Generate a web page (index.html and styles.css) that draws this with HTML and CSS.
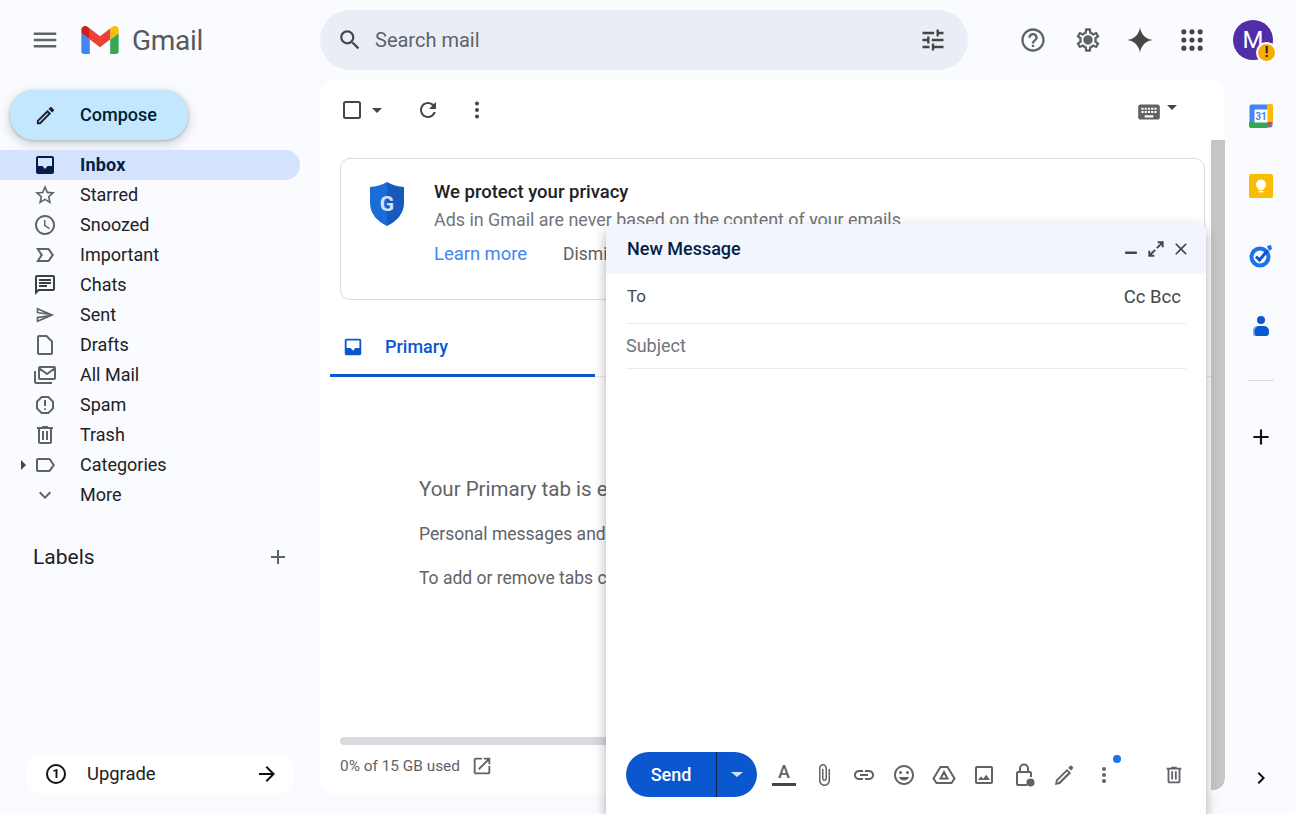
FILE: index.html
```html
<!DOCTYPE html>
<html lang="en">
<head>
  <meta charset="UTF-8">
  <title>Inbox - Gmail</title>
  <link rel="stylesheet" href="styles.css">
</head>
<body>
<div class="app">

  <header class="topbar">
    <div class="brand">
      <svg class="menu-icon" viewBox="0 0 24 24"><path d="M3 18h18v-2H3v2zm0-5h18v-2H3v2zm0-7v2h18V6H3z"/></svg>
      <svg class="logo" viewBox="52 42 88 66">
        <path fill="#4285f4" d="M58 108h14V74L52 59v43c0 3.32 2.69 6 6 6"/>
        <path fill="#34a853" d="M120 108h14c3.32 0 6-2.69 6-6V59l-20 15"/>
        <path fill="#fbbc04" d="M120 48v26l20-15v-8c0-7.42-8.47-11.65-14.4-7.2"/>
        <path fill="#ea4335" d="M72 74V48l24 18 24-18v26L96 92"/>
        <path fill="#c5221f" d="M52 51v8l20 15V48l-5.6-4.2c-5.94-4.45-14.4-.22-14.4 7.2"/>
      </svg>
      <span class="logo-text">Gmail</span>
    </div>
    <div class="search">
      <svg class="search-icon" viewBox="0 0 24 24"><path d="M15.5 14h-.79l-.28-.27C15.41 12.59 16 11.11 16 9.5 16 5.91 13.09 3 9.5 3S3 5.91 3 9.5 5.91 16 9.5 16c1.61 0 3.09-.59 4.23-1.57l.27.28v.79l5 4.99L20.49 19l-4.99-5zm-6 0C7.01 14 5 11.99 5 9.5S7.01 5 9.5 5 14 7.01 14 9.5 11.99 14 9.5 14z"/></svg>
      <span class="search-text">Search mail</span>
      <svg class="tune-icon" viewBox="0 0 24 24"><path d="M3 17v2h6v-2H3zM3 5v2h10V5H3zm10 16v-2h8v-2h-8v-2h-2v6h2zM7 9v2H3v2h4v2h2V9H7zm14 4v-2H11v2h10zm-6-4h2V7h4V5h-4V3h-2v6z"/></svg>
    </div>
    <div class="top-actions">
      <svg class="top-icon" viewBox="0 0 24 24"><path d="M11 18h2v-2h-2v2zm1-16C6.48 2 2 6.48 2 12s4.48 10 10 10 10-4.48 10-10S17.52 2 12 2zm0 18c-4.41 0-8-3.59-8-8s3.59-8 8-8 8 3.59 8 8-3.59 8-8 8zm0-14c-2.21 0-4 1.79-4 4h2c0-1.1.9-2 2-2s2 .9 2 2c0 2-3 1.75-3 5h2c0-2.25 3-2.5 3-5 0-2.21-1.79-4-4-4z"/></svg>
      <svg class="top-icon gear" viewBox="0 0 24 24"><path d="M19.43 12.98c.04-.32.07-.64.07-.98 0-.34-.03-.66-.07-.98l2.11-1.65c.19-.15.24-.42.12-.64l-2-3.46c-.09-.16-.26-.25-.44-.25-.06 0-.12.01-.17.03l-2.49 1c-.52-.4-1.08-.73-1.69-.98l-.38-2.65C14.46 2.18 14.25 2 14 2h-4c-.25 0-.46.18-.49.42l-.38 2.65c-.61.25-1.17.59-1.69.98l-2.49-1c-.06-.02-.12-.03-.18-.03-.17 0-.34.09-.43.25l-2 3.46c-.13.22-.07.49.12.64l2.11 1.65c-.04.32-.07.65-.07.98 0 .33.03.66.07.98l-2.11 1.65c-.19.15-.24.42-.12.64l2 3.46c.09.16.26.25.44.25.06 0 .12-.01.17-.03l2.49-1c.52.4 1.08.73 1.69.98l.38 2.65c.03.24.24.42.49.42h4c.25 0 .46-.18.49-.42l.38-2.65c.61-.25 1.17-.59 1.69-.98l2.49 1c.06.02.12.03.18.03.17 0 .34-.09.43-.25l2-3.46c.12-.22.07-.49-.12-.64l-2.11-1.65zm-1.98-1.71c.04.31.05.52.05.73 0 .21-.02.43-.05.73l-.14 1.13.89.7 1.08.84-.7 1.21-1.27-.51-1.04-.42-.9.68c-.43.32-.84.56-1.25.73l-1.06.43-.16 1.13-.2 1.35h-1.4l-.19-1.35-.16-1.13-1.06-.43c-.43-.18-.83-.41-1.23-.71l-.91-.7-1.06.43-1.27.51-.7-1.21 1.08-.84.89-.7-.14-1.13c-.03-.31-.05-.54-.05-.74s.02-.43.05-.73l.14-1.13-.89-.7-1.08-.84.7-1.21 1.27.51 1.04.42.9-.68c.43-.32.84-.56 1.25-.73l1.06-.43.16-1.13.2-1.35h1.39l.19 1.35.16 1.13 1.06.43c.43.18.83.41 1.23.71l.91.7 1.06-.43 1.27-.51.7 1.21-1.07.85-.89.7.14 1.13zM12 8c-2.21 0-4 1.79-4 4s1.79 4 4 4 4-1.79 4-4-1.79-4-4-4z"/></svg>
      <svg class="top-icon spark" viewBox="0 0 24 24"><path d="M12 1C12.7 7 17 11.3 23 12 17 12.7 12.7 17 12 23 11.3 17 7 12.7 1 12 7 11.3 11.3 7 12 1z"/></svg>
      <svg class="top-icon apps" viewBox="0 0 24 24"><circle cx="5" cy="5" r="2.2"/><circle cx="12" cy="5" r="2.2"/><circle cx="19" cy="5" r="2.2"/><circle cx="5" cy="12" r="2.2"/><circle cx="12" cy="12" r="2.2"/><circle cx="19" cy="12" r="2.2"/><circle cx="5" cy="19" r="2.2"/><circle cx="12" cy="19" r="2.2"/><circle cx="19" cy="19" r="2.2"/></svg>
      <div class="avatar">M<span class="avatar-badge">!</span></div>
    </div>
  </header>

  <aside class="sidebar">
    <button class="compose">
      <svg viewBox="0 0 24 24"><path d="M3 17.25V21h3.75L17.81 9.94l-3.75-3.75L3 17.25zM5.92 19H5v-.92l9.06-9.06.92.92L5.92 19zM20.71 7.04c.39-.39.39-1.02 0-1.41l-2.34-2.34c-.2-.2-.45-.29-.71-.29s-.51.09-.7.28l-1.83 1.83 3.75 3.75 1.83-1.82z"/></svg>
      <span class="compose-text">Compose</span>
    </button>
    <nav class="nav">
      <a class="nav-row active"><svg viewBox="0 0 24 24"><path fill-rule="evenodd" d="M19 3H5c-1.1 0-2 .9-2 2v14c0 1.1.9 2 2 2h14c1.1 0 2-.9 2-2V5c0-1.1-.9-2-2-2zM5 5h14v8h-4.5L12 16l-2.5-3H5z"/></svg>Inbox</a>
      <a class="nav-row"><svg viewBox="0 0 24 24"><path d="M22 9.24l-7.19-.62L12 2 9.19 8.63 2 9.24l5.46 4.73L5.82 21 12 17.27 18.18 21l-1.63-7.03L22 9.24zM12 15.4l-3.76 2.27 1-4.28-3.32-2.88 4.38-.38L12 6.1l1.71 4.04 4.38.38-3.32 2.88 1 4.28L12 15.4z"/></svg>Starred</a>
      <a class="nav-row"><svg viewBox="0 0 24 24"><path d="M11.99 2C6.47 2 2 6.48 2 12s4.47 10 9.99 10C17.52 22 22 17.52 22 12S17.52 2 11.99 2zM12 20c-4.42 0-8-3.58-8-8s3.58-8 8-8 8 3.58 8 8-3.58 8-8 8zm.5-13H11v6l5.25 3.15.75-1.23-4.5-2.67z"/></svg>Snoozed</a>
      <a class="nav-row"><svg viewBox="0 0 24 24"><path d="M15 19H3l4.5-7L3 5h12c.65 0 1.26.31 1.63.84L21 12l-4.37 6.16c-.37.52-.98.84-1.63.84zm-8.5-2H15l3.5-5L15 7H6.5l3.5 5-3.5 5z"/></svg>Important</a>
      <a class="nav-row"><svg class="dark" viewBox="0 0 24 24"><path d="M20 2H4c-1.1 0-1.99.9-1.99 2L2 22l4-4h14c1.1 0 2-.9 2-2V4c0-1.1-.9-2-2-2zM4 4h16v12H5.17L4 17.17V4zm2 10h8v-2H6v2zm0-3h12V9H6v2zm0-3h12V6H6v2z"/></svg>Chats</a>
      <a class="nav-row"><svg class="sent" viewBox="0 0 24 24"><path d="M4.01 6.03l7.51 3.22-7.52-1 .01-2.22m7.5 8.72L4 17.97v-2.22l7.51-1M2.01 3L2 10l15 2-15 2 .01 7L23 12 2.01 3z"/></svg>Sent</a>
      <a class="nav-row"><svg viewBox="0 0 24 24"><path class="line" d="M6 3h7.5L19 8.5V20a1 1 0 0 1-1 1H6a1 1 0 0 1-1-1V4a1 1 0 0 1 1-1z"/></svg>Drafts</a>
      <a class="nav-row"><svg viewBox="0 0 24 24"><path class="line" d="M7 4h14a1 1 0 0 1 1 1v10a1 1 0 0 1-1 1H7a1 1 0 0 1-1-1V5a1 1 0 0 1 1-1zM6.5 5.5L14 11l7.5-5.5M2 8v11a1 1 0 0 0 1 1h16"/></svg>All Mail</a>
      <a class="nav-row"><svg viewBox="0 0 24 24"><path d="M15.73 3H8.27L3 8.27v7.46L8.27 21h7.46L21 15.73V8.27L15.73 3zM19 14.9L14.9 19H9.1L5 14.9V9.1L9.1 5h5.8L19 9.1v5.8zM11 7h2v6h-2z"/><circle cx="12" cy="16" r="1"/></svg>Spam</a>
      <a class="nav-row"><svg viewBox="0 0 24 24"><path d="M15 4V3H9v1H4v2h1v13c0 1.1.9 2 2 2h10c1.1 0 2-.9 2-2V6h1V4h-5zm2 15H7V6h10v13zM9 8h2v9H9zm4 0h2v9h-2z"/></svg>Trash</a>
      <a class="nav-row"><i class="caret"></i><svg viewBox="0 0 24 24"><path d="M17.63 5.84C17.27 5.33 16.67 5 16 5L5 5.01C3.9 5.01 3 5.9 3 7v10c0 1.1.9 1.99 2 1.99L16 19c.67 0 1.27-.33 1.63-.84L22 12l-4.37-6.16zM16 17H5V7h11l3.55 5L16 17z"/></svg>Categories</a>
      <a class="nav-row"><svg viewBox="0 0 24 24"><path d="M16.59 8.59L12 13.17 7.41 8.59 6 10l6 6 6-6z"/></svg>More</a>
    </nav>
    <div class="labels-head">
      <span>Labels</span>
      <svg viewBox="0 0 24 24"><path d="M19 13h-6v6h-2v-6H5v-2h6V5h2v6h6v2z"/></svg>
    </div>
    <div class="upgrade">
      <span class="upgrade-one">1</span>
      <span class="upgrade-text">Upgrade</span>
      <svg viewBox="0 0 24 24"><path d="M12 4l-1.41 1.41L16.17 11H4v2h12.17l-5.58 5.59L12 20l8-8z"/></svg>
    </div>
  </aside>

  <main class="panel">
    <div class="toolbar">
      <svg class="tool-check" viewBox="0 0 24 24"><rect x="4" y="4" width="16" height="16" rx="1.5"/></svg>
      <i class="tool-caret"></i>
      <svg class="tool-icon refresh" viewBox="0 0 24 24"><path d="M17.65 6.35C16.2 4.9 14.21 4 12 4c-4.42 0-7.99 3.58-7.99 8s3.57 8 7.99 8c3.73 0 6.84-2.55 7.73-6h-2.08c-.82 2.33-3.04 4-5.65 4-3.31 0-6-2.69-6-6s2.69-6 6-6c1.66 0 3.14.69 4.22 1.78L13 11h7V4l-2.35 2.35z"/></svg>
      <svg class="tool-icon dots" viewBox="0 0 24 24"><circle cx="12" cy="5.5" r="2"/><circle cx="12" cy="12" r="2"/><circle cx="12" cy="18.5" r="2"/></svg>
      <svg class="tool-keyboard" viewBox="0 0 24 24"><path d="M20 5H4c-1.1 0-1.99.9-1.99 2L2 17c0 1.1.9 2 2 2h16c1.1 0 2-.9 2-2V7c0-1.1-.9-2-2-2zm-9 3h2v2h-2V8zm0 3h2v2h-2v-2zM8 8h2v2H8V8zm0 3h2v2H8v-2zm-1 2H5v-2h2v2zm0-3H5V8h2v2zm9 7H8v-2h8v2zm0-4h-2v-2h2v2zm0-3h-2V8h2v2zm3 3h-2v-2h2v2zm0-3h-2V8h2v2z"/></svg>
      <i class="tool-caret small"></i>
    </div>
    <div class="scroller">
      <div class="content">
        <section class="promo">
          <svg class="shield" viewBox="0 0 36 44">
            <path fill="#1a6dd8" d="M18 0C13 3 7 4.5 1 5v16c0 11 8 19 17 23z"/>
            <path fill="#185abc" d="M18 0c5 3 11 4.5 17 5v16c0 11-8 19-17 23z"/>
            <text x="18" y="29" text-anchor="middle" class="shield-g">G</text>
          </svg>
          <div class="promo-body">
            <h3>We protect your privacy</h3>
            <p>Ads in Gmail are never based on the content of your emails.</p>
            <div class="promo-links"><a class="learn">Learn more</a><a class="dismiss">Dismiss</a></div>
          </div>
        </section>
        <div class="tabs">
          <div class="tab">
            <svg viewBox="0 0 24 24"><path fill-rule="evenodd" d="M19 3H5c-1.1 0-2 .9-2 2v14c0 1.1.9 2 2 2h14c1.1 0 2-.9 2-2V5c0-1.1-.9-2-2-2zM5 5h14v8h-4.5L12 16l-2.5-3H5z"/></svg>
            Primary
          </div>
        </div>
        <div class="empty">
          <h4>Your Primary tab is empty.</h4>
          <p>Personal messages and conversations will appear here.</p>
          <p>To add or remove tabs click inbox settings.</p>
        </div>
        <div class="storage">
          <div class="storage-bar"></div>
          <div class="storage-text">0% of 15 GB used
            <svg viewBox="0 0 24 24"><path d="M19 19H5V5h7V3H5c-1.11 0-2 .9-2 2v14c0 1.1.89 2 2 2h14c1.1 0 2-.9 2-2v-7h-2v7zM14 3v2h3.59l-9.83 9.83 1.41 1.41L19 6.41V10h2V3h-7z"/></svg>
          </div>
        </div>
      </div>
      <div class="scrollbar"></div>
    </div>
  </main>

  <aside class="rail">
    <div class="rail-item">
      <svg viewBox="0 0 24 24">
        <rect x="0.5" y="0.5" width="23" height="23" rx="2" fill="#4285f4"/>
        <path fill="#fbbc04" d="M18 0h4a2 2 0 0 1 2 2v16h-6z"/>
        <path fill="#34a853" d="M0 18h18v6H2a2 2 0 0 1-2-2z"/>
        <path fill="#ea4335" d="M18 24v-6h6z"/>
        <rect x="5.5" y="5.5" width="13" height="13" fill="#fff"/>
        <text x="12" y="15.5" text-anchor="middle" class="cal-day">31</text>
      </svg>
    </div>
    <div class="rail-item">
      <svg viewBox="0 0 24 24">
        <rect width="24" height="24" rx="2" fill="#fbbc04"/>
        <circle cx="12" cy="10.5" r="5" fill="#fff"/>
        <rect x="9.5" y="13" width="5" height="3" fill="#fff"/>
        <rect x="9.8" y="16.8" width="4.4" height="1.6" fill="#fff"/>
      </svg>
    </div>
    <div class="rail-item">
      <svg viewBox="0 0 24 24">
        <circle cx="11" cy="13" r="8.5" fill="none" stroke="#1a73e8" stroke-width="4"/>
        <path d="M7 12.5l3.5 3.5 8-9.5" fill="none" stroke="#0b57d0" stroke-width="3"/>
        <path d="M18 2l4-1 1 4-3 2z" fill="#1a73e8"/>
      </svg>
    </div>
    <div class="rail-item">
      <svg viewBox="0 0 24 24">
        <circle cx="12" cy="6" r="4" fill="#0b57d0"/>
        <path d="M9 12h6a5 5 0 0 1 5 5v2a3 3 0 0 1-3 3H7a3 3 0 0 1-3-3v-2a5 5 0 0 1 5-5z" fill="#0b57d0"/>
        <path d="M9 12a5 5 0 0 0-5 5v2a3 3 0 0 0 3 3h1.5a3 3 0 0 1-3-3v-2c0-2 1.5-4 3.500-5z" fill="#8ab4f8"/>
      </svg>
    </div>
    <div class="rail-line"></div>
    <svg class="rail-plus" viewBox="0 0 24 24"><path d="M19 13h-6v6h-2v-6H5v-2h6V5h2v6h6v2z"/></svg>
    <svg class="rail-chevron" viewBox="0 0 24 24"><path d="M10 6L8.59 7.41 13.17 12l-4.58 4.59L10 18l6-6z"/></svg>
  </aside>

  <!-- floating compose window -->
  <section class="composer">
    <div class="composer-head">
      <span class="composer-title">New Message</span>
      <div class="composer-controls">
        <svg viewBox="0 0 24 24"><rect x="5" y="15" width="14" height="3"/></svg>
        <svg viewBox="0 0 24 24"><path class="line" d="M14 4h6v6M20 4l-7 7M4 14v6h6M4 20l7-7"/></svg>
        <svg viewBox="0 0 24 24"><path d="M19 6.41L17.59 5 12 10.59 6.41 5 5 6.41 10.59 12 5 17.59 6.41 19 12 13.41 17.59 19 19 17.59 13.41 12z"/></svg>
      </div>
    </div>
    <div class="field field-to"><span class="to-label">To</span><span class="cc">Cc Bcc</span></div>
    <div class="field field-subject">Subject</div>
    <div class="composer-foot">
      <div class="send">
        <span class="send-main">Send</span>
        <span class="send-more"><i></i></span>
      </div>
      <div class="foot-icons">
        <span class="foot-a">A</span>
        <svg viewBox="0 0 24 24"><path d="M16.5 6v11.5c0 2.21-1.79 4-4 4s-4-1.79-4-4V5c0-1.38 1.12-2.5 2.5-2.5s2.5 1.12 2.5 2.5v10.5c0 .55-.45 1-1 1s-1-.45-1-1V6H10v9.5c0 1.38 1.12 2.5 2.5 2.5s2.5-1.12 2.5-2.5V5c0-2.21-1.79-4-4-4S7 2.79 7 5v12.5c0 3.04 2.46 5.5 5.5 5.5s5.5-2.46 5.5-5.5V6h-1.5z"/></svg>
        <svg viewBox="0 0 24 24"><path d="M3.9 12c0-1.71 1.39-3.1 3.1-3.1h4V7H7c-2.76 0-5 2.24-5 5s2.24 5 5 5h4v-1.9H7c-1.71 0-3.1-1.39-3.1-3.1zM8 13h8v-2H8v2zm9-6h-4v1.9h4c1.71 0 3.1 1.39 3.1 3.1s-1.39 3.1-3.1 3.1h-4V17h4c2.76 0 5-2.24 5-5s-2.24-5-5-5z"/></svg>
        <svg viewBox="0 0 24 24"><path d="M11.99 2C6.47 2 2 6.48 2 12s4.47 10 9.99 10C17.52 22 22 17.52 22 12S17.52 2 11.99 2zM12 20c-4.42 0-8-3.58-8-8s3.58-8 8-8 8 3.58 8 8-3.58 8-8 8zM12 17.5c2.33 0 4.31-1.46 5.11-3.5H6.89c.8 2.04 2.78 3.5 5.11 3.5z"/><circle cx="15.5" cy="9.5" r="1.5"/><circle cx="8.5" cy="9.5" r="1.5"/></svg>
        <svg viewBox="0 0 24 24"><path class="line" d="M8.5 4h7L22.5 15.5 19.5 20h-15L1.5 15.5zM12 9l3.5 6.5h-7z"/></svg>
        <svg viewBox="0 0 24 24"><path d="M19 5v14H5V5h14m0-2H5c-1.1 0-2 .9-2 2v14c0 1.1.9 2 2 2h14c1.1 0 2-.9 2-2V5c0-1.1-.9-2-2-2zm-4.86 8.86l-3 3.87L9 13.14 6 17h12l-3.86-5.14z"/></svg>
        <svg viewBox="0 0 24 24"><path class="line" d="M15 22H6a1 1 0 0 1-1-1V10a1 1 0 0 1 1-1h12a1 1 0 0 1 1 1v4M8 9V5.5a4 4 0 0 1 8 0V9"/><circle cx="18.5" cy="19.5" r="4"/></svg>
        <svg viewBox="0 0 24 24"><path d="M3 22l.9-5L15 5.9l4 4L8 21zM5.8 17.8l-.6 1.8 1.8-.6 9.2-9.2-1.2-1.2zM16.2 4.8l1.6-1.6a1.8 1.8 0 0 1 2.5 0l.3.3a1.8 1.8 0 0 1 0 2.5l-1.6 1.6z"/></svg>
        <div class="foot-more">
          <svg viewBox="0 0 24 24"><circle cx="12" cy="6" r="2"/><circle cx="12" cy="12" r="2"/><circle cx="12" cy="18" r="2"/></svg>
          <i class="notice-dot"></i>
        </div>
      </div>
      <svg class="foot-trash" viewBox="0 0 24 24"><path d="M15 4V3H9v1H4v2h1v13c0 1.1.9 2 2 2h10c1.1 0 2-.9 2-2V6h1V4h-5zm2 15H7V6h10v13zM9 8h2v9H9zm4 0h2v9h-2z"/></svg>
    </div>
  </section>

</div>
</body>
</html>
```

FILE: styles.css
```css
* { box-sizing: border-box; }
html, body { margin: 0; height: 100%; overflow: hidden; }
body { font-family: Roboto, "Liberation Sans", sans-serif; background: #f9fbff; color: #202124; }
svg { display: block; flex: none; fill: #5f6368; }
.line { fill: none; stroke: currentColor; stroke-width: 2; }
i { display: block; }

.app {
  position: relative;
  display: grid;
  grid-template-columns: 320px 905px 70px;
  grid-template-rows: 80px 734px;
  width: 1295px;
  height: 814px;
  overflow: hidden;
}

/* top bar */
.topbar { grid-column: 1 / 4; display: flex; align-items: center; }
.brand { width: 320px; display: flex; align-items: center; padding-left: 30px; }
.menu-icon { width: 30px; height: 30px; }
.logo { width: 38px; height: 28px; margin-left: 21px; }
.logo-text { margin-left: 13px; font-size: 28px; color: #55595e; letter-spacing: -0.3px; }

.search {
  width: 648px;
  height: 60px;
  border-radius: 30px;
  background: #e9eef6;
  display: flex;
  align-items: center;
  padding: 0 21px 0 17px;
}
.search-icon { width: 26px; height: 26px; fill: #444746; }
.search-text { margin-left: 12px; font-size: 20px; color: #5f6368; flex: 1; }
.tune-icon { width: 28px; height: 28px; fill: #444746; }

.top-actions { display: flex; align-items: center; margin-left: 51px; }
.top-icon { width: 28px; height: 28px; margin-right: 24px; }
.top-icon.gear { margin-left: 3px; }
.spark, .apps { fill: #444746; }
.apps { margin-right: 20px; }
.avatar {
  position: relative;
  width: 40px;
  height: 40px;
  margin-left: 7px;
  border-radius: 50%;
  background: #512da8;
  color: #fff;
  font-size: 24px;
  display: flex;
  align-items: center;
  justify-content: center;
}
.avatar-badge {
  position: absolute;
  right: -4px;
  bottom: -3px;
  width: 21px;
  height: 21px;
  border: 2px solid #fff;
  border-radius: 50%;
  background: #f9ab00;
  color: #202124;
  font-size: 15px;
  font-weight: 700;
  line-height: 17px;
  text-align: center;
}

/* sidebar */
.sidebar { display: flex; flex-direction: column; }
.compose {
  display: flex;
  align-items: center;
  width: 178px;
  height: 50px;
  margin: 10px 0 10px 10px;
  padding: 0 0 0 24px;
  border: 0;
  border-radius: 24px;
  background: #c2e7ff;
  box-shadow: 0 1px 3px rgba(60,64,67,.3), 0 4px 8px 3px rgba(60,64,67,.15);
  font: 500 18px Roboto, sans-serif;
  color: #001d35;
}
.compose svg { width: 23px; height: 23px; margin-right: 23px; fill: #202124; }
.compose-text { margin-top: -2px; }

.nav-row {
  position: relative;
  display: flex;
  align-items: center;
  width: 300px;
  height: 30px;
  padding: 0 0 2px 33px;
  border-radius: 0 15px 15px 0;
  font-size: 18px;
  color: #202124;
}
.nav-row svg { width: 24px; height: 24px; margin: 2px 23px 0 0; color: #5f6368; }
.nav-row svg.dark { fill: #3c4043; }
.nav-row svg.sent { width: 20px; height: 20px; margin: 2px 25px 0 2px; }
.nav-row.active { background: #d3e3fd; font-weight: 700; color: #041e49; letter-spacing: 0.2px; }
.nav-row.active svg { fill: #041e49; }
.caret {
  position: absolute;
  left: 21px;
  top: 10px;
  border-left: 5px solid #444746;
  border-top: 5px solid transparent;
  border-bottom: 5px solid transparent;
}

.labels-head {
  display: flex;
  align-items: center;
  justify-content: space-between;
  width: 300px;
  height: 34px;
  margin-top: 30px;
  padding: 0 10px 0 33px;
  font-size: 21px;
  color: #202124;
}
.labels-head svg { width: 24px; height: 24px; }

.upgrade {
  display: flex;
  align-items: center;
  width: 270px;
  height: 40px;
  margin: auto 0 20px 25px;
  padding: 0 16px 0 21px;
  border-radius: 20px;
  background: #fff;
  font-size: 18.4px;
}
.upgrade-one {
  width: 20px;
  height: 20px;
  border: 2px solid #111;
  border-radius: 50%;
  font-size: 13px;
  font-weight: 700;
  line-height: 16px;
  text-align: center;
  color: #111;
}
.upgrade-text { margin: -2px 0 0 21px; flex: 1; }
.upgrade svg { width: 24px; height: 24px; fill: #111; }

/* main panel */
.panel {
  display: flex;
  flex-direction: column;
  margin-bottom: 20px;
  border-radius: 16px;
  background: #fff;
  overflow: hidden;
}
.toolbar { display: flex; align-items: center; height: 60px; padding-left: 20px; flex: none; }
.tool-check { width: 24px; height: 24px; fill: none; stroke: #444746; stroke-width: 2; }
.tool-caret { margin-left: 8px; border-top: 5px solid #444746; border-left: 5px solid transparent; border-right: 5px solid transparent; }
.tool-icon { width: 24px; height: 24px; fill: #444746; }
.refresh { margin-left: 34px; }
.dots { margin-left: 25px; }
.tool-keyboard { width: 26px; height: 26px; margin: 3px 0 0 auto; fill: #5f6368; }
.tool-caret.small { margin: -5px 48px 0 5px; }

.scroller { display: flex; flex: 1; min-height: 0; }
.content { flex: 1; display: flex; flex-direction: column; min-width: 0; overflow: hidden; }
.scrollbar { width: 14px; height: 650px; background: #c6c6c6; border-radius: 0 0 12px 0; }

.promo {
  display: flex;
  height: 142px;
  margin: 18px 6px 0 20px;
  padding: 23px 0 0 28px;
  border: 1px solid #dadce0;
  border-radius: 10px;
  flex: none;
}
.shield { width: 36px; height: 44px; }
.shield-g { font: 700 21px Roboto, sans-serif; fill: #d2e3fc; }
.promo-body { margin-left: 29px; margin-top: -1px; }
.promo h3 { margin: 0; font-size: 18.5px; font-weight: 500; line-height: 22px; color: #202124; }
.promo p { margin: 6px 0 0; font-size: 17.9px; line-height: 22px; color: #70757a; white-space: nowrap; }
.promo-links { display: flex; margin-top: 12px; font-size: 18.4px; line-height: 22px; }
.learn { color: #4285f4; }
.dismiss { margin-left: 36px; color: #5f6368; font-size: 17.5px; }

.tabs { height: 57px; margin: 20px 0 0 10px; border-bottom: 1px solid #e8eaed; flex: none; }
.tab {
  display: flex;
  align-items: center;
  width: 265px;
  height: 57px;
  padding: 0 0 2px 12px;
  border-bottom: 3px solid #0b57d0;
  font-size: 18px;
  font-weight: 500;
  color: #0b57d0;
}
.tab svg { width: 22px; height: 22px; margin: 2px 21px 0 0; fill: #0b57d0; }

.empty { margin: 100px 0 0 99px; white-space: nowrap; color: #5f6368; }
.empty h4 { margin: 0; font-size: 20.5px; font-weight: 400; line-height: 24px; }
.empty p { margin: 22px 0 0; font-size: 17.5px; line-height: 22px; }

.storage { margin: auto 0 0 20px; padding-bottom: 13px; }
.storage-bar { width: 400px; height: 8px; border-radius: 4px; background: #d9dadf; }
.storage-text { display: flex; align-items: center; gap: 12px; height: 30px; margin-top: 6px; font-size: 15.4px; color: #5f6368; }
.storage-text svg { width: 22px; height: 22px; margin-left: -1px; }

/* right rail */
.rail { display: flex; flex-direction: column; align-items: center; padding: 1px 0 0 1px; }
.rail-item { height: 70px; display: flex; align-items: center; }
.rail-item svg { width: 24px; height: 24px; }
.cal-day { font: 700 10px Roboto, sans-serif; fill: #4285f4; }
.rail-line { width: 26px; height: 1px; margin-top: 19px; background: #dadce0; }
.rail-plus { width: 26px; height: 26px; margin-top: 43px; fill: #111; }
.rail-chevron { width: 24px; height: 24px; margin-top: auto; margin-bottom: 24px; fill: #111; }

/* compose window */
.composer {
  position: absolute;
  left: 606px;
  top: 224px;
  width: 600px;
  height: 590px;
  display: flex;
  flex-direction: column;
  border-radius: 8px 8px 0 0;
  background: #fff;
  box-shadow: 0 8px 10px 1px rgba(0,0,0,.14), 0 3px 14px 2px rgba(0,0,0,.12), 0 5px 5px -3px rgba(0,0,0,.2);
}
.composer-head {
  display: flex;
  align-items: center;
  justify-content: space-between;
  height: 50px;
  padding: 0 15px 0 21px;
  border-radius: 8px 8px 0 0;
  background: #f2f6fc;
  font-size: 18px;
  font-weight: 500;
  color: #041e49;
}
.composer-title { margin-top: -2px; }
.composer-controls { display: flex; gap: 5px; }
.composer-controls svg { width: 20px; height: 20px; color: #444746; fill: #444746; }
.composer-controls .line { fill: none; stroke-width: 2.4; }

.field { display: flex; align-items: center; margin: 0 20px; border-bottom: 1px solid #e8eaed; font-size: 17px; }
.field-to { height: 50px; justify-content: space-between; padding: 0 5px 4px 1px; color: #444746; }
.to-label { margin-top: -2px; }
.field-subject { height: 45px; padding-bottom: 2px; color: #70757a; font-size: 18px; }
.cc { color: #444746; font-size: 18.5px; }

.composer-foot { display: flex; align-items: center; margin-top: auto; padding: 0 20px 17px; }
.send { display: flex; width: 131px; height: 45px; border-radius: 23px; background: #0b57d0; color: #fff; }
.send-main { width: 91px; border-right: 1px solid #041e49; text-align: center; font-size: 18px; font-weight: 500; line-height: 45px; }
.send-more { flex: 1; display: flex; align-items: center; justify-content: center; }
.send-more i { border-top: 5px solid #d3e3fd; border-left: 6px solid transparent; border-right: 6px solid transparent; }

.foot-icons { display: flex; align-items: center; gap: 16px; margin-left: 15px; color: #5f6368; }
.foot-icons svg { width: 24px; height: 24px; }
.foot-a { width: 24px; height: 22px; border-bottom: 3px solid #444746; text-align: center; font-size: 18px; font-weight: 500; line-height: 16px; color: #5f6368; }
.foot-more { position: relative; }
.notice-dot { position: absolute; right: -5px; top: -8px; width: 8px; height: 8px; border-radius: 50%; background: #1a73e8; }
.foot-trash { width: 22px; height: 22px; margin-left: auto; margin-right: 1px; }
```
